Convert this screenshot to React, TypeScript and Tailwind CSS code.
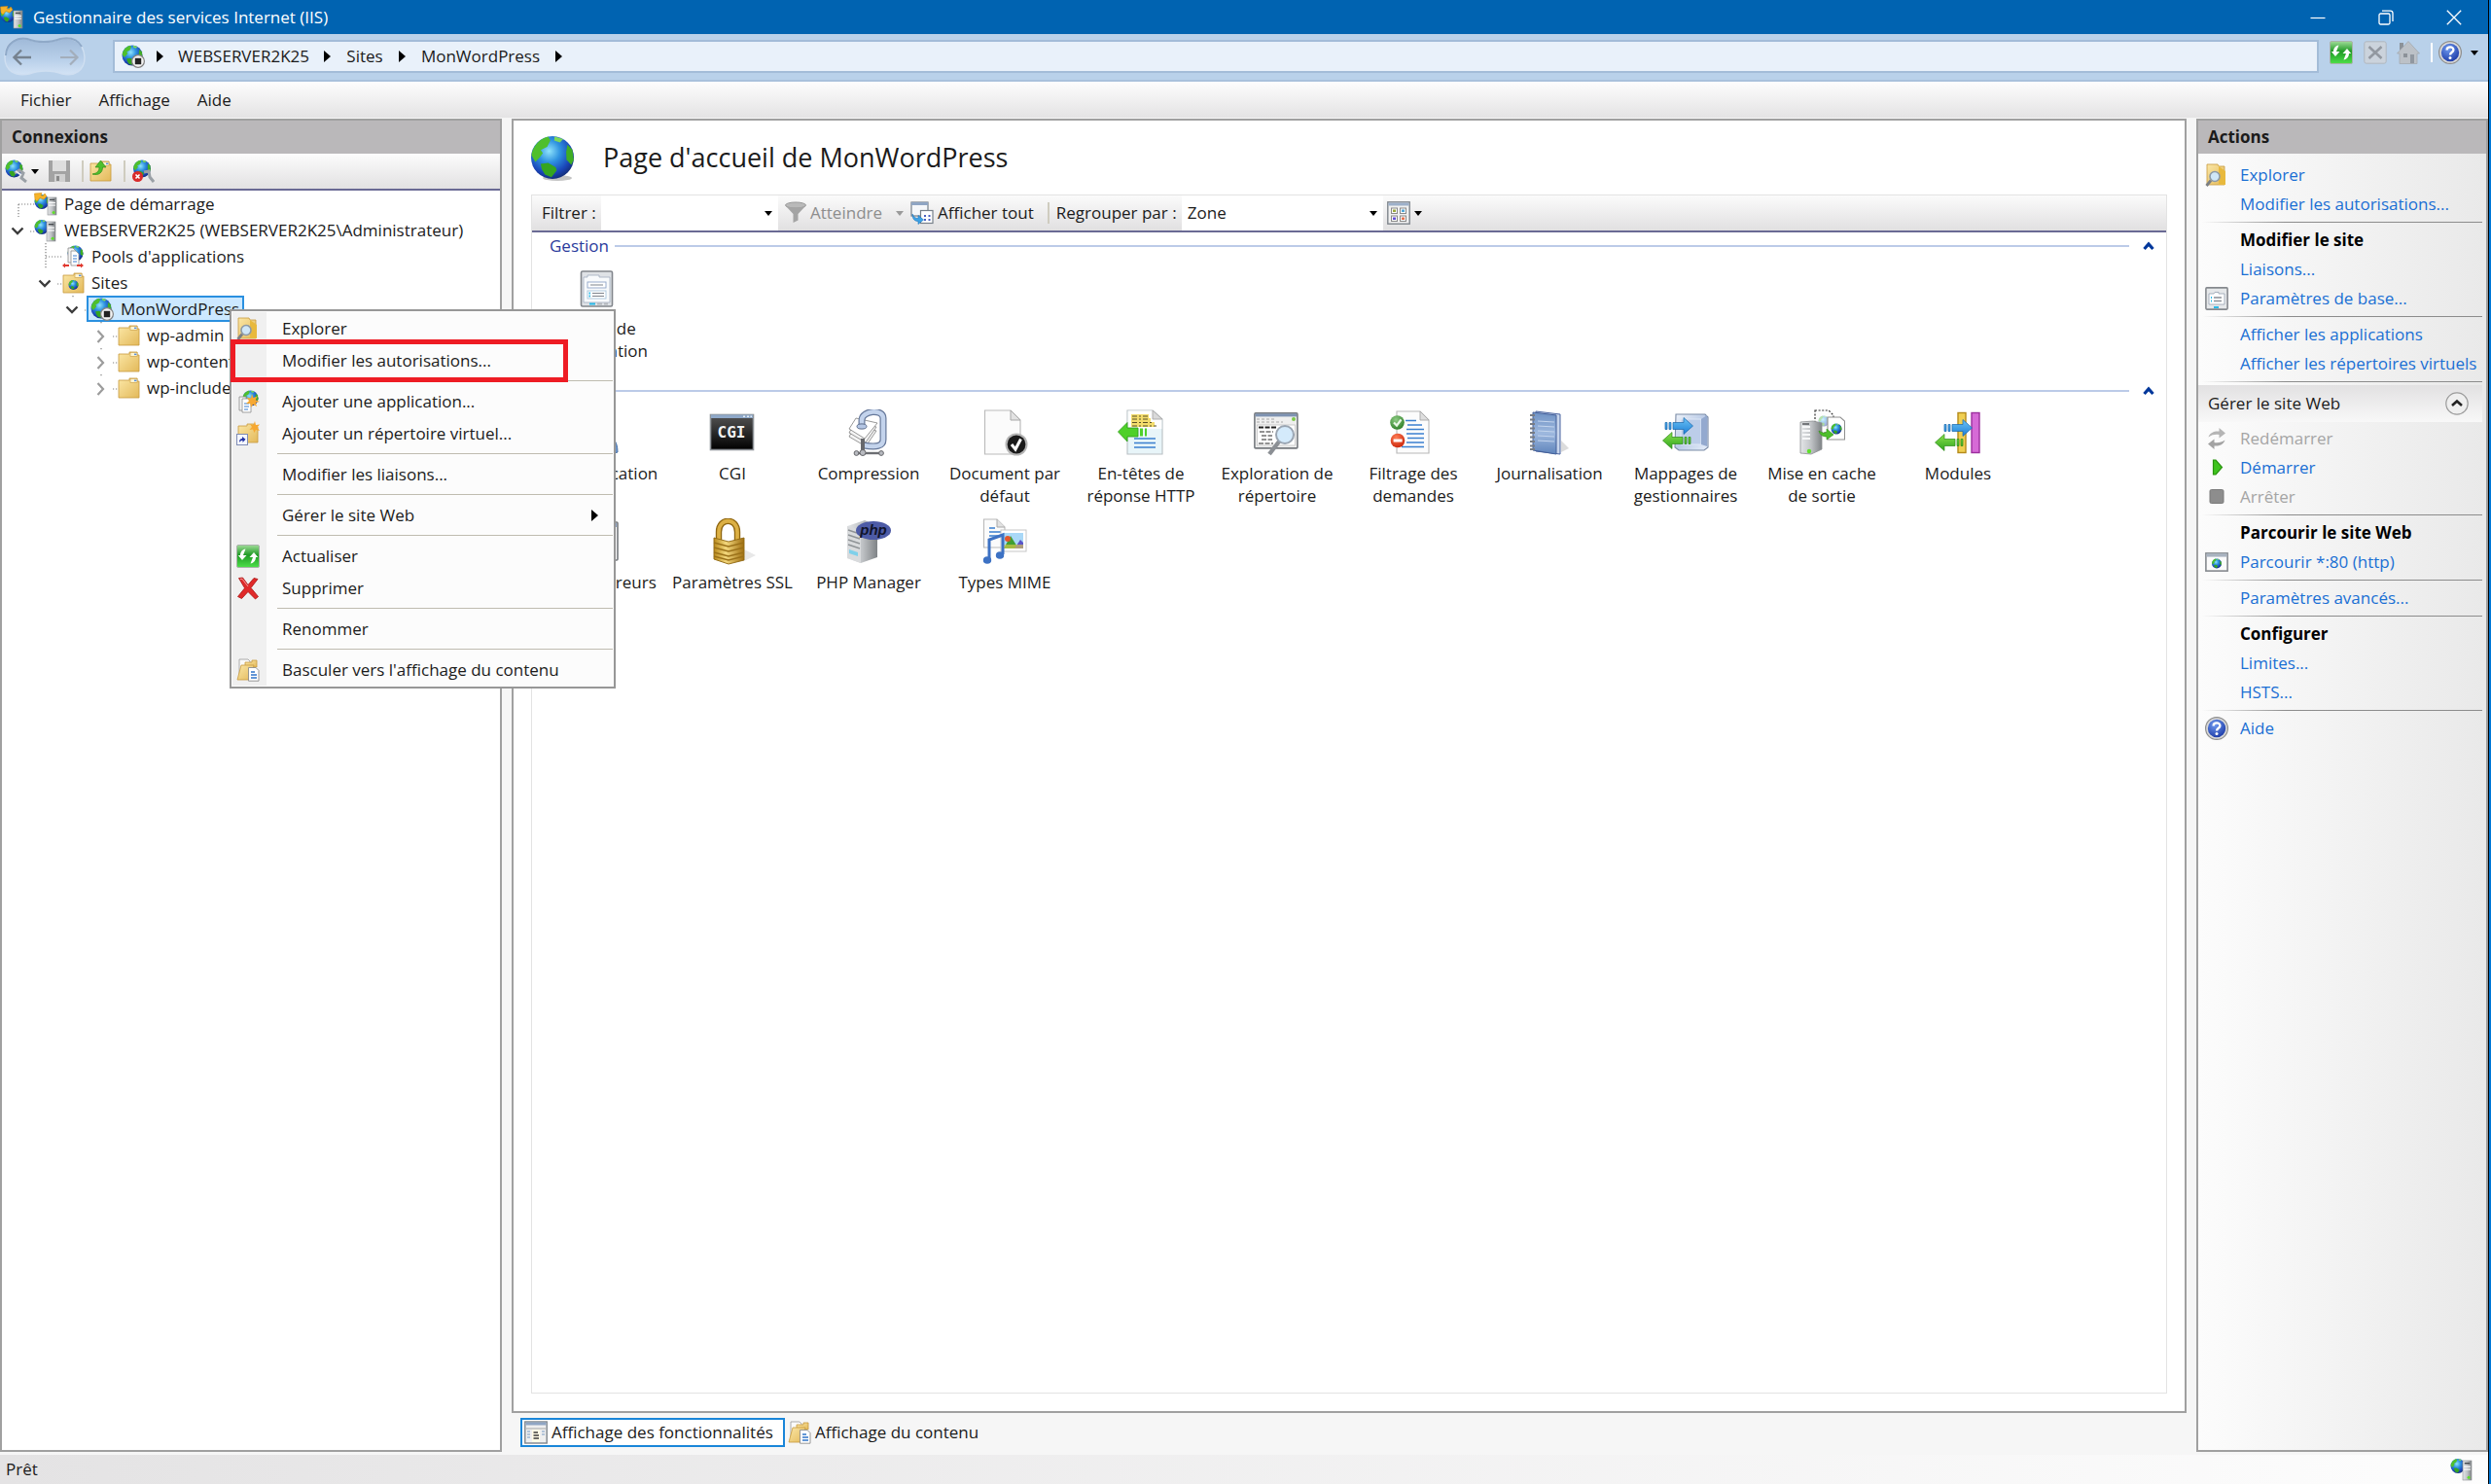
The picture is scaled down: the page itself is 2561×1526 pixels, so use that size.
import React from 'react';

type IconProps = { className?: string };

/* ---------- shared drawing parts ---------- */

const Gradients = () => (
  <svg className="absolute w-0 h-0" aria-hidden="true">
    <defs>
      <radialGradient id="sea" cx="42%" cy="35%" r="65%">
        <stop offset="0" stopColor="#8fe3fb" />
        <stop offset="0.4" stopColor="#2f93e0" />
        <stop offset="0.8" stopColor="#1a45b8" />
        <stop offset="1" stopColor="#14307f" />
      </radialGradient>
      <linearGradient id="folder" x1="0" y1="0" x2="1" y2="1">
        <stop offset="0" stopColor="#fbe7a6" />
        <stop offset="1" stopColor="#e3b95a" />
      </linearGradient>
      <linearGradient id="metal" x1="0" y1="0" x2="1" y2="0">
        <stop offset="0" stopColor="#e4e6e8" />
        <stop offset="0.5" stopColor="#c0c3c6" />
        <stop offset="1" stopColor="#7f8386" />
      </linearGradient>
      <linearGradient id="greenBtn" x1="0" y1="0" x2="0" y2="1">
        <stop offset="0" stopColor="#9fdc98" />
        <stop offset="0.45" stopColor="#1f9a24" />
        <stop offset="1" stopColor="#4ee04a" />
      </linearGradient>
      <linearGradient id="greenArrow" x1="0" y1="0" x2="0" y2="1">
        <stop offset="0" stopColor="#8be04e" />
        <stop offset="1" stopColor="#2fa51e" />
      </linearGradient>
      <linearGradient id="blueArrow" x1="0" y1="0" x2="0" y2="1">
        <stop offset="0" stopColor="#6cc3f5" />
        <stop offset="1" stopColor="#1d7fd6" />
      </linearGradient>
      <linearGradient id="gold" x1="0" y1="0" x2="1" y2="0">
        <stop offset="0" stopColor="#b98a1c" />
        <stop offset="0.4" stopColor="#f3d77c" />
        <stop offset="1" stopColor="#a06f10" />
      </linearGradient>
      <linearGradient id="blackBox" x1="0" y1="0" x2="0" y2="1">
        <stop offset="0" stopColor="#555" />
        <stop offset="1" stopColor="#000" />
      </linearGradient>
      <linearGradient id="steel" x1="0" y1="0" x2="1" y2="1">
        <stop offset="0" stopColor="#eef3fa" />
        <stop offset="0.5" stopColor="#b9cae6" />
        <stop offset="1" stopColor="#e6eefa" />
      </linearGradient>
      <linearGradient id="book" x1="0" y1="0" x2="0" y2="1">
        <stop offset="0" stopColor="#6f92c4" />
        <stop offset="0.5" stopColor="#9db8de" />
        <stop offset="1" stopColor="#5f84bb" />
      </linearGradient>
      <radialGradient id="helpBlue" cx="40%" cy="30%" r="75%">
        <stop offset="0" stopColor="#6f9af0" />
        <stop offset="1" stopColor="#1c3aa6" />
      </radialGradient>
      <radialGradient id="okGreen" cx="40%" cy="30%" r="75%">
        <stop offset="0" stopColor="#8ecb84" />
        <stop offset="1" stopColor="#2b7d25" />
      </radialGradient>
      <radialGradient id="stopRed" cx="40%" cy="30%" r="75%">
        <stop offset="0" stopColor="#ff7d55" />
        <stop offset="1" stopColor="#c92409" />
      </radialGradient>
      <linearGradient id="navBlob" x1="0" y1="0" x2="0" y2="1">
        <stop offset="0" stopColor="#9fb9d8" />
        <stop offset="0.6" stopColor="#b9d0ea" />
        <stop offset="1" stopColor="#d3e3f5" />
      </linearGradient>
    </defs>
  </svg>
);

const Globe = ({ cx, cy, r }: { cx: number; cy: number; r: number }) => (
  <g transform={`translate(${cx} ${cy}) scale(${r / 10})`}>
    <circle r="10" fill="url(#sea)" />
    <path d="M-2 -9.8C-6 -9 -9.4 -5 -9.8 -1L-8 2L-6 0L-4.5 -2L-5.5 -3.5L-2.5 -5L-1 -8Z" fill="#4fbf2c" />
    <path d="M-5.5 3L-2 2.5L1.5 4.5L2 6L-0.5 9.2L-3.5 8L-5 5.5Z" fill="#35a51f" />
    <path d="M7 -6L9.3 -3.6L9.9 1L8.8 3.4L6.6 1L6.4 -2.5Z" fill="#3fae24" />
    <path d="M1 -9.8L5 -8.6L3.5 -7L0.8 -8Z" fill="#7ed957" />
  </g>
);

const Tower = ({ x, y, w, h }: { x: number; y: number; w: number; h: number }) => (
  <g>
    <rect x={x} y={y} width={w} height={h} fill="url(#metal)" stroke="#8b8e91" strokeWidth="0.6" />
    <rect x={x + w * 0.2} y={y + h * 0.1} width={w * 0.6} height={h * 0.07} fill="#44484c" />
    <rect x={x + w * 0.12} y={y + h * 0.28} width={w * 0.76} height={h * 0.06} fill="#fff" />
    <rect x={x + w * 0.12} y={y + h * 0.42} width={w * 0.76} height={h * 0.06} fill="#fff" />
    <circle cx={x + w * 0.68} cy={y + h * 0.86} r={w * 0.17} fill="#5fe02a" />
  </g>
);

const StopBadge = () => (
  <g>
    <circle cx="17" cy="17" r="6.4" fill="#f4f4f4" stroke="#808080" strokeWidth="1.2" />
    <rect x="13.8" y="13.8" width="6.4" height="6.4" fill="#222" />
  </g>
);

/* ---------- 24px icons ---------- */

const Svg24: React.FC<{ className?: string; children: React.ReactNode }> = ({ className = '', children }) => (
  <svg viewBox="0 0 24 24" className={`w-6 h-6 shrink-0 ${className}`} aria-hidden="true">
    {children}
  </svg>
);

const StartPageIcon = ({ className }: IconProps) => (
  <Svg24 className={className}>
    <Globe cx={8} cy={9.5} r={7.5} />
    <path d="M0.5 1L8 0.5L7 3L9.5 3.5L11 1L13 4L10 7L6 5.5L3 9L1 7Z" fill="#f6b42a" stroke="#d58b0c" strokeWidth="0.6" />
    <Tower x={14} y={5} w={9} h={18} />
  </Svg24>
);

const ServerIcon = ({ className }: IconProps) => (
  <Svg24 className={className}>
    <Globe cx={8} cy={8.5} r={7.5} />
    <Tower x={13} y={3} w={9} h={20} />
  </Svg24>
);

const PoolsIcon = () => (
  <Svg24>
    <Globe cx={14.5} cy={8.5} r={8} />
    <path d="M7 3H12L15 6V18H7Z" fill="#f4f4f4" stroke="#8c8c8c" strokeWidth="0.8" />
    <path d="M10 6H15L18 9V21H10Z" fill="#fff" stroke="#8c8c8c" strokeWidth="0.8" />
    <path d="M12 11H16M12 14H16M12 17H16" stroke="#3b7fd0" strokeWidth="1.2" />
    <path d="M4 18.5L1 21L4 23.5V22H8V20H4ZM20 18.5L23 21L20 23.5V22H16V20H20Z" fill="#e0382e" />
  </Svg24>
);

const FolderShape = () => (
  <g>
    <path d="M2 4H13V2H21V5H23V22H2Z" fill="url(#folder)" stroke="#c89b3e" strokeWidth="0.8" />
    <rect x="14" y="2.4" width="7" height="4" fill="#fdf4d2" stroke="#c89b3e" strokeWidth="0.6" />
    <rect x="18" y="3.6" width="2.4" height="1.5" fill="#5a8fd8" />
  </g>
);

const FolderIcon = () => (
  <Svg24>
    <FolderShape />
  </Svg24>
);

const SitesIcon = () => (
  <Svg24>
    <FolderShape />
    <Globe cx={12.5} cy={14} r={5} />
  </Svg24>
);

const SiteStoppedIcon = ({ className }: IconProps) => (
  <Svg24 className={className}>
    <Globe cx={11} cy={11} r={10.5} />
    <StopBadge />
  </Svg24>
);

const GlobeBigIcon = () => (
  <svg viewBox="0 0 48 48" className="w-12 h-12 shrink-0" aria-hidden="true">
    <ellipse cx="27" cy="45" rx="15" ry="3" fill="#c4c4c4" />
    <Globe cx={22} cy={24} r={22} />
  </svg>
);

const ConnectIcon = () => (
  <Svg24>
    <Globe cx={9.5} cy={9.5} r={9} />
    <path d="M10 14L15 11L19 14L17 19L22 23" fill="none" stroke="#9aa0a6" strokeWidth="3" />
    <path d="M11 12L17 16" stroke="#e7eaee" strokeWidth="2" />
  </Svg24>
);

const DisconnectIcon = () => (
  <Svg24>
    <Globe cx={11} cy={9.5} r={9} />
    <path d="M13 13L18 12L19 18L23 23" fill="none" stroke="#9aa0a6" strokeWidth="3" />
    <circle cx="6.5" cy="17.5" r="5.5" fill="#d92b2b" />
    <path d="M4.5 15.5L8.5 19.5M8.5 15.5L4.5 19.5" stroke="#fff" strokeWidth="1.6" />
  </Svg24>
);

const SaveIcon = () => (
  <Svg24>
    <path d="M1 1H23V23H1Z" fill="#a3a3a3" />
    <rect x="5" y="1" width="14" height="11" fill="#dedede" />
    <rect x="7" y="15" width="11" height="8" fill="#d0d0d0" />
    <rect x="9" y="17" width="3" height="5" fill="#8a8a8a" />
  </Svg24>
);

const FolderUpIcon = () => (
  <Svg24>
    <FolderShape />
    <path d="M4 15C10 14 11 11 11 8H7L12.5 1L18 8H14.5C14.5 13 11 17 4 15Z" fill="#4fbf2c" stroke="#2f8d17" strokeWidth="0.7" />
  </Svg24>
);

const ExploreIcon = () => (
  <Svg24>
    <path d="M2 1H13L14 3H20V22H2Z" fill="url(#folder)" stroke="#c89b3e" strokeWidth="0.8" />
    <path d="M14 3L21 8V22H14Z" fill="#e8b93d" />
    <path d="M1.5 23L6 17.5" stroke="#7b7f84" strokeWidth="2.8" />
    <circle cx="10" cy="13.5" r="5" fill="#cfe6f7" stroke="#8d99a5" strokeWidth="1.6" />
  </Svg24>
);

const AddAppIcon = () => (
  <Svg24>
    <Globe cx={14.5} cy={8.5} r={8} />
    <path d="M3 7H10V21H3Z" fill="#f4f4f4" stroke="#8c8c8c" strokeWidth="0.8" />
    <path d="M6 9H12L15 12V23H6Z" fill="#fff" stroke="#8c8c8c" strokeWidth="0.8" />
    <path d="M8 14H13M8 17H13M8 20H12" stroke="#3b7fd0" strokeWidth="1.2" />
    <path d="M16 4L17.4 8L21.5 6.5L19.8 10.3L24 12L19.8 13L21 17L17.2 14.8L15 18L14.2 14L10 14L13 11.2L10.8 7.6L15 8.6Z" fill="#f6a832" />
  </Svg24>
);

const AddVdirIcon = () => (
  <Svg24 className="overflow-visible">
    <path d="M2 4H11V2H18V5H22V21H2Z" fill="url(#folder)" stroke="#c89b3e" strokeWidth="0.8" />
    <path d="M19 -1L20 3L24 2.5L21.5 5.5L24 9L20 8L18.5 11L17 7.5L13.5 8L16 5L14 2L17.6 3Z" fill="#f6a832" />
    <rect x="0.5" y="12.5" width="11" height="11" fill="#f5f7ff" stroke="#7f8cb5" />
    <path d="M3 21C3 18 4 17 6 17V15L9.5 17.8L6.5 21V19C5 19 4 19.5 3 21Z" fill="#2436a5" />
  </Svg24>
);

const RefreshIcon = ({ className }: IconProps) => (
  <Svg24 className={className}>
    <rect x="0.5" y="0.5" width="23" height="23" rx="1.5" fill="url(#greenBtn)" stroke="#a9b3a9" />
    <path d="M9.5 4.5L7 11H10.5L6 16L1.8 11H4C4 8 6 5 9.5 4.5Z" fill="#fff" />
    <path d="M14.5 19.5L17 13H13.5L18 8L22.2 13H20C20 16 18 19 14.5 19.5Z" fill="#fff" />
  </Svg24>
);

const DeleteIcon = () => (
  <Svg24>
    <path d="M2.5 1.5L6.5 1L12 8.5L18 1.5L22 2.5L15 11.5L22.5 20.5L19.5 23L12 15.5L5.5 22.5L1.5 20.5L8.6 11.8Z" fill="#e02a2a" stroke="#a91414" strokeWidth="0.8" />
    <path d="M4 2.5L6 2.3L12 10" fill="none" stroke="#f59a9a" strokeWidth="1" />
  </Svg24>
);

const ContentViewIcon = () => (
  <Svg24>
    <path d="M3 1H12L14 3V16H3Z" fill="#fafafa" stroke="#9b9b9b" strokeWidth="0.8" />
    <path d="M9 4H16V2H21V9H9Z" fill="url(#folder)" stroke="#c89b3e" strokeWidth="0.8" />
    <path d="M5 7H18L15 22H1Z" fill="url(#folder)" stroke="#c89b3e" strokeWidth="0.8" />
    <path d="M12.5 9.5H20L23 12.5V23.2H12.5Z" fill="#fff" stroke="#8c8c8c" strokeWidth="0.9" />
    <path d="M15 14H19M15 17H21M15 20H21" stroke="#2f74c9" strokeWidth="1.3" />
  </Svg24>
);

const FeaturesViewIcon = () => (
  <Svg24>
    <rect x="0.8" y="1" width="22.4" height="22" fill="#efefef" stroke="#7f858c" strokeWidth="1.4" />
    <rect x="1.5" y="1.5" width="21" height="3" fill="#8fa5c4" />
    <path d="M2 8H22" stroke="#a7a7a7" strokeWidth="1" />
    <rect x="8" y="9" width="8" height="13" fill="#fffbe6" />
    <path d="M9.5 12H14M9.5 15H15M9.5 18H15" stroke="#3b3b3b" strokeWidth="1.3" />
    <path d="M3 11H6M3 14H6M3 17H6M18 11H21M18 14H21" stroke="#9fb6d2" strokeWidth="1.3" />
  </Svg24>
);

const FunnelIcon = () => (
  <Svg24>
    <ellipse cx="12" cy="4" rx="10.5" ry="3" fill="#b9b9b9" stroke="#9a9a9a" />
    <path d="M1.5 4.5L9.5 13V22L14.5 19.5V13L22.5 4.5C19 7 5 7 1.5 4.5Z" fill="#a4a4a4" />
  </Svg24>
);

const ShowAllIcon = () => (
  <Svg24>
    <rect x="1" y="1" width="17" height="14" fill="#f5f7fa" stroke="#77808a" strokeWidth="1.2" />
    <rect x="1" y="1" width="17" height="3" fill="#8fa5c4" />
    <rect x="10.5" y="9.5" width="12.5" height="13" fill="#fff" stroke="#77808a" strokeWidth="1.2" />
    <path d="M14 15H16M18.5 15H20.5M14 19H16M18.5 19H20.5" stroke="#4a5fc0" strokeWidth="2" />
    <path d="M2 13C4 17 6 17.5 8 17.5V14.5L13.5 19L8 23.5V20.5C4 20.5 2 18 2 13Z" fill="#3ca2e6" stroke="#1c74b8" strokeWidth="0.6" />
  </Svg24>
);

const ViewModeIcon = () => (
  <Svg24>
    <rect x="0.8" y="0.8" width="22.4" height="22.4" fill="#f0f0f0" stroke="#7f858c" strokeWidth="1.4" />
    <rect x="1.5" y="1.5" width="21" height="3" fill="#9db0ca" />
    <g fill="#fafafa" stroke="#8a8a8a" strokeWidth="1">
      <rect x="4.5" y="7" width="6" height="5.5" />
      <rect x="13.5" y="7" width="6" height="5.5" />
      <rect x="4.5" y="15" width="6" height="5.5" />
      <rect x="13.5" y="15" width="6" height="5.5" />
    </g>
    <rect x="6" y="8.500" width="3" height="2.500" fill="#9aa83c" />
    <rect x="15" y="8.500" width="3" height="2.500" fill="#4fa6d8" />
    <rect x="6" y="16.500" width="3" height="2.500" fill="#6450d8" />
    <rect x="15" y="16.500" width="3" height="2.500" fill="#e8704c" />
  </Svg24>
);

const StopNavIcon = () => (
  <Svg24>
    <rect x="0.8" y="0.8" width="22.4" height="22.4" rx="2" fill="#cbd3dc" stroke="#b0b7bf" />
    <path d="M5.5 6L18.5 18M18.5 6L5.5 18" stroke="#9298a0" strokeWidth="2.6" />
  </Svg24>
);

const HomeIcon = () => (
  <Svg24>
    <path d="M3 2H7V7L3 10Z" fill="#8c9299" />
    <path d="M12 0.5L0.5 13H3V23.5H21V13H23.5Z" fill="#bcc1c7" stroke="#a3a9b0" strokeWidth="0.8" />
    <rect x="7" y="13" width="4" height="4" fill="#8c9299" />
    <rect x="14" y="14" width="4" height="9" fill="#9097a0" />
  </Svg24>
);

const HelpIcon = () => (
  <Svg24>
    <circle cx="12" cy="12" r="11.4" fill="#d9d9d9" stroke="#8e8e8e" strokeWidth="1.2" />
    <circle cx="12" cy="12" r="9.2" fill="url(#helpBlue)" />
    <path d="M8.6 9.4C8.6 5.4 15.6 5.4 15.4 9.4C15.3 11.8 12 11.8 12 14.4" fill="none" stroke="#fff" strokeWidth="2.3" />
    <circle cx="12" cy="17.6" r="1.5" fill="#fff" />
  </Svg24>
);

const BasicSettingsIcon = () => (
  <Svg24>
    <rect x="0.9" y="0.9" width="22.2" height="22.2" rx="1" fill="#e6e8ea" stroke="#85898e" strokeWidth="1.6" />
    <path d="M4 18V7H9L10 5.5H14V7H20V18Z" fill="#fff" stroke="#9fa9b8" strokeWidth="0.9" />
    <path d="M6 11H7M6 14.5H7" stroke="#28b9e8" strokeWidth="1.8" />
    <path d="M9 11H17M9 14.5H17" stroke="#8a8f96" strokeWidth="1.4" />
    <path d="M9 21H14" stroke="#28b9e8" strokeWidth="2" />
  </Svg24>
);

const RestartIcon = () => (
  <Svg24>
    <path d="M3.5 10.5C5 5.5 10 4 14.5 4.5V1L21 6.5L14.5 11.5V8C10.5 7.5 7 8 3.5 10.5Z" fill="#b5b5b5" />
    <path d="M20.5 13.5C19 18.5 14 20 9.5 19.5V23L3 17.5L9.5 12.5V16C13.5 16.5 17 16 20.5 13.5Z" fill="#a3a3a3" />
  </Svg24>
);

const StartIcon = () => (
  <Svg24>
    <path d="M8.5 4H11L17.5 11.5L11 19H8.5Z" fill="#3fc41f" stroke="#2a9310" strokeWidth="1.2" />
  </Svg24>
);

const StopIcon = () => (
  <Svg24>
    <rect x="5" y="4.5" width="14" height="14" rx="1.5" fill="#8d8d8d" stroke="#7b7b7b" />
  </Svg24>
);

const BrowseIcon = () => (
  <Svg24>
    <rect x="0.9" y="2.9" width="22.2" height="18.2" fill="#fbfbfb" stroke="#85898e" strokeWidth="1.6" />
    <rect x="1.5" y="3.2" width="21" height="3.4" fill="#a9b3c0" />
    <Globe cx={12} cy={13.5} r={5} />
  </Svg24>
);

/* ---------- 48px feature icons ---------- */

const Svg48: React.FC<{ children: React.ReactNode }> = ({ children }) => (
  <svg viewBox="0 0 48 48" className="w-12 h-12 shrink-0" aria-hidden="true">
    {children}
  </svg>
);

const ArrowRight = ({ x, y }: { x: number; y: number }) => (
  <g transform={`translate(${x} ${y})`} fill="url(#blueArrow)" stroke="#1765ab" strokeWidth="0.7">
    <path d="M0 5.5H2V12.5H0ZM4 5.5H6V12.5H4ZM8 5.5H19V0.5L28.5 9L19 17.5V12.5H8Z" />
  </g>
);

const ArrowLeft = ({ x, y }: { x: number; y: number }) => (
  <g transform={`translate(${x} ${y})`} fill="url(#greenArrow)" stroke="#2c8a17" strokeWidth="0.7">
    <path d="M29 5.5H27V12.5H29ZM25 5.5H23V12.5H25ZM21 5.5H10V0.5L0.5 9L10 17.5V12.5H21Z" />
  </g>
);

const ConfigEditorIcon = () => (
  <Svg48>
    <rect x="8.5" y="7" width="32" height="36" rx="1.5" fill="#dfe2e6" stroke="#82868c" strokeWidth="1.6" />
    <path d="M11 39V13H15V11H27V13H38V39Z" fill="#f8fafc" stroke="#a9b3c4" strokeWidth="0.9" />
    <rect x="15" y="18" width="19" height="6" fill="#fff" stroke="#8fa5c8" strokeWidth="0.9" />
    <rect x="15" y="27" width="19" height="8" fill="#fff" stroke="#a9c5dc" strokeWidth="0.9" />
    <path d="M18 21H31M20 29.5H32M20 32.5H32" stroke="#7d838b" strokeWidth="1.2" />
    <path d="M16.5 29.5H18M16.5 32.5H18M17 40.5H23" stroke="#28b9e8" strokeWidth="2" />
    <path d="M25 40.5H30M32 40.5H36" stroke="#b4b8bd" strokeWidth="2" />
  </Svg48>
);

const AuthIcon = () => (
  <Svg48>
    <circle cx="24" cy="14" r="9" fill="#e6c39d" />
    <path d="M10 46C10 30 16 25 28 25C40 25 46 32 46 44C42 46 14 47 10 46Z" fill="#6d96cc" stroke="#4c74a8" />
  </Svg48>
);

const CgiIcon = () => (
  <Svg48>
    <rect x="1.5" y="5.5" width="44" height="36" fill="url(#blackBox)" stroke="#8f9499" strokeWidth="1.6" />
    <rect x="2" y="5.5" width="43" height="3.5" fill="#8fa9c9" />
    <path d="M35 7.2H37M39 7.2H41M42.5 7.2H44" stroke="#e4edf6" strokeWidth="1.4" />
    <text x="23" y="29" textAnchor="middle" fontFamily="DejaVu Sans Mono" fontWeight="700" fontSize="16" fill="#f2f2f2">CGI</text>
  </Svg48>
);

const CompressionIcon = () => (
  <Svg48>
    <g stroke="#7e7e7e" strokeWidth="0.8" fill="#f4f4f4">
      <path d="M4 28L10 17L32 22L21 38Z" />
      <path d="M4 24L10 13L32 18L21 34Z" />
      <path d="M4 20L11 9L33 14L20 30Z" fill="#fff" />
    </g>
    <path d="M17 17V11C17 1 39 -1 39 9V31C39 38 32 39 19 37" fill="none" stroke="#66789a" strokeWidth="7" />
    <path d="M17 17V11C17 1 39 -1 39 9V31C39 38 32 39 19 37" fill="none" stroke="#c3d3ec" strokeWidth="4.6" />
    <ellipse cx="17" cy="17.5" rx="5" ry="2.6" fill="#b4c6e4" stroke="#5c6c8a" />
    <path d="M18 30V46" stroke="#66676b" strokeWidth="4" />
    <path d="M11 45H37" stroke="#6c6e72" strokeWidth="2.4" />
    <circle cx="11.5" cy="45" r="2.4" fill="#b8bac0" stroke="#66676b" />
    <circle cx="18" cy="44.5" r="3" fill="#b8bac0" stroke="#66676b" />
    <circle cx="37" cy="45" r="2.4" fill="#b8bac0" stroke="#66676b" />
  </Svg48>
);

const DefaultDocIcon = () => (
  <Svg48>
    <path d="M3.5 1H30L40 11V46H3.5Z" fill="#fbfbfb" stroke="#bcbcbc" strokeWidth="1.2" />
    <path d="M30 1V11H40Z" fill="#e2e2e2" stroke="#a8a8a8" strokeWidth="1" />
    <circle cx="36" cy="36" r="11.5" fill="#b5b5b5" />
    <circle cx="36" cy="36" r="9.4" fill="#1a1a1a" />
    <path d="M31 36L35 41L40.5 30.5" fill="none" stroke="#fff" strokeWidth="3" />
  </Svg48>
);

const HeadersIcon = () => (
  <Svg48>
    <path d="M10 1H36L46 10V46H10Z" fill="#e8f5f9" stroke="#b9c0c4" strokeWidth="1.1" />
    <path d="M10.6 1.6H36L45.4 10V20H10.6Z" fill="#fdfdfd" />
    <path d="M36 1V10H46Z" fill="#d9d9d9" stroke="#a8a8a8" strokeWidth="0.9" />
    <path d="M14 5H32V9H34V13H38V18H14Z" fill="#f3dc6c" />
    <path d="M15 7H31M15 10H33M15 13.5H37M15 17H40" stroke="#5a5228" strokeWidth="1.2" strokeDasharray="5 2 2 2" />
    <path d="M0.5 23L10 13.5V19H21V28H10V33Z" fill="#4fd02a" stroke="#2c9a17" strokeWidth="0.8" />
    <path d="M23 19.5H26V27.5H23ZM28 19.5H30V27.5H28Z" fill="#4fd02a" />
    <path d="M17 30H39M17 34.5H39M17 39H39" stroke="#3a7fcf" strokeWidth="1.6" />
  </Svg48>
);

const DirBrowseIcon = () => (
  <Svg48>
    <rect x="0.9" y="3.9" width="44" height="36" rx="1" fill="#efefef" stroke="#75797e" strokeWidth="1.6" />
    <rect x="1.6" y="4.4" width="42.6" height="3" fill="#7e93b2" />
    <path d="M3 10H22M3 13H30" stroke="#a7a7a7" strokeWidth="1.2" strokeDasharray="3 2" />
    <circle cx="41" cy="10" r="2" fill="#7ec84a" />
    <rect x="3.5" y="16" width="39" height="21" fill="#fff" stroke="#c2c2c2" strokeWidth="0.8" />
    <path d="M5 18.5H24" stroke="#222" strokeWidth="2" strokeDasharray="5 1.5" />
    <path d="M6 23H20M8 27H19M8 31H19M5 35H20" stroke="#6f6f6f" strokeWidth="1.6" strokeDasharray="5 1.5" />
    <path d="M16 46L26 33" stroke="#8b8f94" strokeWidth="4.4" />
    <circle cx="32" cy="26" r="9" fill="#d4eafb" stroke="#9aa5b2" strokeWidth="2" />
  </Svg48>
);

const FilterReqIcon = () => (
  <Svg48>
    <path d="M7 2H31L40 11V45H7Z" fill="#fcfcfc" stroke="#b7b7b7" strokeWidth="1.1" />
    <path d="M31 2V11H40Z" fill="#dedede" stroke="#a8a8a8" strokeWidth="0.9" />
    <path d="M16 11.5H27M18 16H33M17 20.5H35M17 25H35M18 29.5H35M17 34H35M12 38.5H35" stroke="#3a7fcf" strokeWidth="1.6" />
    <circle cx="7.5" cy="13.5" r="7.3" fill="url(#okGreen)" />
    <path d="M4 13.5L7 16.5L11.5 10.5" fill="none" stroke="#e9f7e6" strokeWidth="2.2" />
    <circle cx="8" cy="32" r="7.3" fill="url(#stopRed)" />
    <rect x="3.6" y="30.5" width="9" height="3" fill="#fff" />
  </Svg48>
);

const LoggingIcon = () => (
  <Svg48>
    <path d="M36 44L44 40L36 32Z" fill="#dcdcdc" />
    <path d="M10 2L35 5V46L10 43Z" fill="#c7d5ec" stroke="#4a64a0" strokeWidth="1" />
    <path d="M7 3L31 6V46L7 42Z" fill="url(#book)" stroke="#44609a" strokeWidth="1" />
    <path d="M12 12L29 13M12 17L29 18M12 22L29 23M12 27L29 28M12 32L29 33" stroke="#c4d5ee" strokeWidth="1" />
    <path d="M4 6H9M4 10.5H9M4 15H9M4 19.5H9M4 24H9M4 28.5H9M4 33H9M4 37.5H9M4 41H9" stroke="#777c84" strokeWidth="1.8" />
  </Svg48>
);

const HandlerIcon = () => (
  <Svg48>
    <path d="M14 5H44L47 8V39L43 42H17L13 39Z" fill="url(#steel)" stroke="#7b8ba6" strokeWidth="1.1" />
    <path d="M19 10H40V36H19Z" fill="#bccde9" stroke="#dfe8f6" strokeWidth="1" />
    <path d="M40 10L46 6V38L40 36Z" fill="#93a9cf" />
    <ArrowRight x={3} y={8} />
    <ArrowLeft x={0} y={23} />
  </Svg48>
);

const CacheIcon = () => (
  <Svg48>
    <path d="M17 1H31L36 6V24H17Z" fill="#fcfcfc" stroke="#333" strokeWidth="1.2" strokeDasharray="2 1.6" />
    <g opacity="0.4">
      <Globe cx={26} cy={12} r={5.5} />
    </g>
    <path d="M2 13L15 12L24 14V41L13 46L2 45Z" fill="url(#metal)" stroke="#8b8e91" strokeWidth="0.8" />
    <path d="M4 18H12M4 22H12M4 26H12M4 30H12" stroke="#f6f7f8" strokeWidth="2" />
    <path d="M4 15H11" stroke="#4c5054" strokeWidth="1.4" />
    <circle cx="11" cy="43" r="2.2" fill="#5fe02a" />
    <path d="M30 8H43L47.500 12V31H30Z" fill="#fff" stroke="#8f8f8f" strokeWidth="1.1" />
    <Globe cx={39} cy={20} r={5.5} />
    <path d="M21 22C24 24 27 25 29 23V20L36 26L29 31V28C25 28 22 26 21 22Z" fill="#4fbf2c" stroke="#2f8d17" strokeWidth="0.6" />
  </Svg48>
);

const ModulesIcon = () => (
  <Svg48>
    <rect x="24" y="3.5" width="8" height="41" fill="#f0cf52" stroke="#b58a1a" strokeWidth="1.4" />
    <rect x="38" y="3.5" width="8" height="41" fill="#d66ad6" stroke="#9c2f9e" strokeWidth="1.4" />
    <ArrowRight x={10} y={10} />
    <ArrowLeft x={0} y={25} />
  </Svg48>
);

const ErrorPagesIcon = () => (
  <Svg48>
    <rect x="2" y="4" width="44" height="39" rx="1" fill="#fbfbfb" stroke="#75797e" strokeWidth="1.6" />
    <rect x="3" y="5" width="42" height="4" fill="#8fa5c4" />
    <circle cx="22" cy="27" r="9" fill="url(#stopRed)" />
  </Svg48>
);

const SslIcon = () => (
  <Svg48>
    <path d="M36 44L48 38L36 32Z" fill="#e8e8e8" />
    <path d="M10 26V14C10 -1 29 -1 29 14V26" fill="none" stroke="#8f6610" strokeWidth="6.4" />
    <path d="M10 26V14C10 -1 29 -1 29 14V26" fill="none" stroke="#dcb044" strokeWidth="3.8" />
    <path d="M5 20L20 24L36 20V43L20 47L5 42Z" fill="url(#gold)" stroke="#8f6610" strokeWidth="0.9" />
    <path d="M5 25L20 29L36 25M5 30L20 34L36 30M5 35L20 39L36 35M5 39L20 43L36 39" fill="none" stroke="#9a7018" strokeWidth="1.3" />
  </Svg48>
);

const PhpIcon = () => (
  <Svg48>
    <path d="M2 8L20 2L33 8V40L16 46L2 41Z" fill="url(#metal)" />
    <path d="M2 8L16 12V46L2 41Z" fill="#d9dbdd" />
    <path d="M3 12L15 16M3 17L15 21M3 22L15 26M3 27L15 31" stroke="#8f9396" strokeWidth="1.4" />
    <path d="M4 32L13 35V39L4 36Z" fill="#7fd0ea" />
    <ellipse cx="29" cy="12.5" rx="18" ry="9.6" fill="#4d5ba6" />
    <text x="29" y="17" textAnchor="middle" fontFamily="Liberation Sans" fontWeight="700" fontStyle="italic" fontSize="15" fill="#10142c">php</text>
  </Svg48>
);

const MimeIcon = () => (
  <Svg48>
    <path d="M2.5 1H16L24 9V30H2.5Z" fill="#fbfbfb" stroke="#b9b9b9" strokeWidth="1.1" />
    <path d="M16 1V9H24" fill="#e2e2e2" stroke="#a8a8a8" strokeWidth="1" />
    <path d="M8 10H14M8 14H20M8 18H20" stroke="#3a7fcf" strokeWidth="1.5" />
    <rect x="20" y="12" width="26" height="22" fill="#fff" stroke="#c6c6c6" />
    <rect x="23" y="15" width="20" height="16" fill="#a9d8f7" />
    <path d="M23 31L30 18L38 31Z" fill="#3f9f34" />
    <path d="M34 31L40 22L43 25V31Z" fill="#5a55c8" />
    <circle cx="27" cy="21" r="3" fill="#e2562b" />
    <path d="M23 27H43V31H23Z" fill="#e6cf4c" opacity="0.6" />
    <path d="M8 43V22L22 17V37" fill="none" stroke="#3d72c4" strokeWidth="3" />
    <ellipse cx="6" cy="43" rx="4.2" ry="3.8" fill="#3d72c4" />
    <ellipse cx="19" cy="38" rx="4.2" ry="3.8" fill="#3d72c4" />
  </Svg48>
);

/* ---------- small glyphs ---------- */

const CaretDown = ({ className = 'text-black' }: IconProps) => (
  <svg viewBox="0 0 8 5" className={`w-2 h-[5px] shrink-0 ${className}`} aria-hidden="true">
    <path d="M0 0H8L4 5Z" fill="currentColor" />
  </svg>
);

const CaretRight = () => (
  <svg viewBox="0 0 7 12" className="w-[7px] h-3 shrink-0" aria-hidden="true">
    <path d="M0 0L7 6L0 12Z" fill="#000" />
  </svg>
);

/* ---------- data ---------- */

interface TreeNode {
  label: string;
  level: number;
  state: 'open' | 'closed' | 'leaf';
  icon: React.ReactNode;
  selected?: boolean;
  guides: string;
}

const tree: TreeNode[] = [
  { label: 'Page de démarrage', level: 0, state: 'leaf', icon: <StartPageIcon />, guides: 'M15 14H32M15 14V27' },
  { label: 'WEBSERVER2K25 (WEBSERVER2K25\\Administrateur)', level: 0, state: 'open', icon: <ServerIcon />, guides: 'M27 15H32' },
  { label: "Pools d'applications", level: 1, state: 'leaf', icon: <PoolsIcon />, guides: 'M15 0V27M15 14H32' },
  { label: 'Sites', level: 1, state: 'open', icon: <SitesIcon />, guides: 'M27 15H32' },
  { label: 'MonWordPress', level: 2, state: 'open', icon: <SiteStoppedIcon />, selected: true, guides: 'M15 0V2M27 15H32' },
  { label: 'wp-admin', level: 3, state: 'closed', icon: <FolderIcon />, guides: 'M15 0V2M27 15H32' },
  { label: 'wp-content', level: 3, state: 'closed', icon: <FolderIcon />, guides: 'M15 0V2M27 15H32' },
  { label: 'wp-includes', level: 3, state: 'closed', icon: <FolderIcon />, guides: 'M15 0V2M27 15H32' },
];

const indents = ['pl-[2px]', 'pl-[30px]', 'pl-[58px]', 'pl-[87px]'];

interface Feature {
  label: string;
  icon: React.ReactNode;
}

const management: Feature[] = [{ label: 'Éditeur de configuration', icon: <ConfigEditorIcon /> }];

const iis: Feature[] = [
  { label: 'Authentification', icon: <AuthIcon /> },
  { label: 'CGI', icon: <CgiIcon /> },
  { label: 'Compression', icon: <CompressionIcon /> },
  { label: 'Document par défaut', icon: <DefaultDocIcon /> },
  { label: 'En-têtes de réponse HTTP', icon: <HeadersIcon /> },
  { label: 'Exploration de répertoire', icon: <DirBrowseIcon /> },
  { label: 'Filtrage des demandes', icon: <FilterReqIcon /> },
  { label: 'Journalisation', icon: <LoggingIcon /> },
  { label: 'Mappages de gestionnaires', icon: <HandlerIcon /> },
  { label: 'Mise en cache de sortie', icon: <CacheIcon /> },
  { label: 'Modules', icon: <ModulesIcon /> },
  { label: "Pages d'erreurs", icon: <ErrorPagesIcon /> },
  { label: 'Paramètres SSL', icon: <SslIcon /> },
  { label: 'PHP Manager', icon: <PhpIcon /> },
  { label: 'Types MIME', icon: <MimeIcon /> },
];

type MenuEntry = 'sep' | { label: string; icon?: React.ReactNode; submenu?: boolean; marked?: boolean };

const contextMenu: MenuEntry[] = [
  { label: 'Explorer', icon: <ExploreIcon /> },
  { label: 'Modifier les autorisations...', marked: true },
  'sep',
  { label: 'Ajouter une application...', icon: <AddAppIcon /> },
  { label: 'Ajouter un répertoire virtuel...', icon: <AddVdirIcon /> },
  'sep',
  { label: 'Modifier les liaisons...' },
  'sep',
  { label: 'Gérer le site Web', submenu: true },
  'sep',
  { label: 'Actualiser', icon: <RefreshIcon /> },
  { label: 'Supprimer', icon: <DeleteIcon /> },
  'sep',
  { label: 'Renommer' },
  'sep',
  { label: "Basculer vers l'affichage du contenu", icon: <ContentViewIcon /> },
];

/* ---------- panels ---------- */

const TitleBar = () => (
  <header className="h-[35px] shrink-0 bg-[#0063b1] text-white flex items-center">
    <StartPageIcon className="mr-[10px]" />
    <h1 className="text-[17px]">Gestionnaire des services Internet (IIS)</h1>
    <div className="ml-auto flex items-center gap-[54px] pr-[27px]">
      <button aria-label="Réduire">
        <svg viewBox="0 0 16 16" className="w-4 h-4">
          <path d="M0.5 8.5H15.5" stroke="#fff" strokeWidth="1.2" />
        </svg>
      </button>
      <button aria-label="Restaurer">
        <svg viewBox="0 0 16 16" className="w-4 h-4" fill="none" stroke="#fff" strokeWidth="1.3">
          <rect x="1" y="4" width="11" height="11" rx="1.5" />
          <path d="M4 1.2H12.5C14 1.2 15 2.2 15 3.6V12" />
        </svg>
      </button>
      <button aria-label="Fermer">
        <svg viewBox="0 0 16 16" className="w-4 h-4">
          <path d="M0.8 0.8L15.2 15.2M15.2 0.8L0.8 15.2" stroke="#fff" strokeWidth="1.3" />
        </svg>
      </button>
    </div>
  </header>
);

const AddressBar = () => (
  <div className="h-[49px] shrink-0 bg-[#b9d1ea] border-b-2 border-[#a9c1dc] flex items-start">
    <svg viewBox="0 0 112 46" className="w-28 h-[46px] shrink-0" aria-hidden="true">
      <path d="M5 24C5 8 18 2 28 5C38 9 52 9 62 5C74 2 86 8 87 24C87 38 76 44 64 41C54 37 40 37 30 41C16 44 5 38 5 24Z" fill="url(#navBlob)" stroke="#cfdff1" strokeWidth="1.5" />
      <path d="M6 22C6 9 18 3 28 5C38 9 52 9 62 5C72 3 80 6 84 13" fill="none" stroke="#8fa9c8" strokeWidth="2" />
      <path d="M32 24H15M22 16.5L14.5 24L22 31.5" fill="none" stroke="#76828f" strokeWidth="2.4" />
      <path d="M62 24H79M72 16.5L79.5 24L72 31.5" fill="none" stroke="#a3aebb" strokeWidth="2.2" />
    </svg>
    <nav className="mt-[6px] ml-[4px] h-[34px] flex-1 border-2 border-[#a3bcd8] bg-[#e9f1fa] flex items-center pl-[7px] text-[17px]">
      <SiteStoppedIcon />
      <span className="ml-[12px] flex items-center">
        <CaretRight />
        <a href="#serveur" className="w-[165px] text-center">WEBSERVER2K25</a>
        <CaretRight />
        <a href="#sites" className="w-[70px] text-center">Sites</a>
        <CaretRight />
        <a href="#monwordpress" className="w-[154px] text-center">MonWordPress</a>
        <CaretRight />
      </span>
    </nav>
    <div className="mt-[7px] ml-[11px] pr-[10px] flex items-center">
      <button aria-label="Actualiser"><RefreshIcon /></button>
      <button aria-label="Arrêter" className="ml-[11px]"><StopNavIcon /></button>
      <button aria-label="Accueil" className="ml-[10px]"><HomeIcon /></button>
      <span className="ml-[11px] w-[2px] h-5 bg-white" />
      <button aria-label="Aide" className="ml-[6px] flex items-center gap-[9px]">
        <HelpIcon />
        <CaretDown />
      </button>
    </div>
  </div>
);

const MenuBar = () => (
  <nav className="h-[37px] shrink-0 bg-linear-to-b from-[#fdfdfd] to-[#e4e3e4] flex items-center gap-[28px] pl-[21px] text-[17px]">
    <button>Fichier</button>
    <button>Affichage</button>
    <button>Aide</button>
  </nav>
);

const PanelTitle: React.FC<{ children: React.ReactNode }> = ({ children }) => (
  <h2 className="h-[34px] shrink-0 bg-[#bab8ba] pl-[10px] flex items-center font-bold text-[17px]">{children}</h2>
);

const ToolSeparator = () => <span className="w-[2px] h-[22px] shrink-0 bg-[#cfccbf]" />;

const Connections = () => (
  <aside className="w-[516px] shrink-0 border-2 border-[#a0a0a0] bg-white flex flex-col">
    <PanelTitle>Connexions</PanelTitle>
    <div className="h-[38px] shrink-0 bg-linear-to-b from-[#fcfcfc] to-[#e2e1e2] border-b-2 border-[#6a6a94] flex items-center pl-[3px]">
      <button aria-label="Se connecter" className="flex items-center gap-[3px]">
        <ConnectIcon />
        <CaretDown />
      </button>
      <button aria-label="Enregistrer" className="ml-[9px] mr-[11px]"><SaveIcon /></button>
      <ToolSeparator />
      <button aria-label="Remonter" className="ml-[5px] mr-[12px]"><FolderUpIcon /></button>
      <ToolSeparator />
      <button aria-label="Supprimer la connexion" className="ml-[6px]"><DisconnectIcon /></button>
    </div>
    <ul role="tree">
      {tree.map((node) => (
        <li key={node.label} role="treeitem" aria-selected={!!node.selected} className={`h-[27px] flex items-center ${indents[node.level]}`}>
          <svg viewBox="0 0 29 27" className="w-[29px] h-[27px] shrink-0 overflow-visible" aria-hidden="true">
            <path d={node.guides} fill="none" stroke="#808080" strokeWidth="1.2" strokeDasharray="1.2 1.8" />
            {node.state === 'open' && <path d="M8.5 11.5L14 17L19.5 11.5" fill="none" stroke="#3c3c3c" strokeWidth="2.4" />}
            {node.state === 'closed' && <path d="M11.5 9L17 15L11.5 21" fill="none" stroke="#9c9c9c" strokeWidth="2.2" />}
          </svg>
          <span
            className={
              node.selected
                ? 'h-[27px] flex items-center gap-[7px] pl-[2px] pr-[3px] border-2 border-[#2a90e0] bg-[#cce8ff]'
                : 'h-[27px] flex items-center gap-[7px] pl-[2px]'
            }
          >
            {node.icon}
            <span className="text-[17px] whitespace-nowrap">{node.label}</span>
          </span>
        </li>
      ))}
    </ul>
  </aside>
);

const FeatureGroup: React.FC<{ title: string; items: Feature[] }> = ({ title, items }) => (
  <section className="pl-[18px] pr-[12px]">
    <h3 className="h-[27px] flex items-center text-[17px] text-[#2a3a9c]">
      {title}
      <span className="ml-[6px] h-[2px] flex-1 bg-[#bccbe8]" />
      <button aria-label="Réduire le groupe" className="ml-[14px]">
        <svg viewBox="0 0 12 10" className="w-3 h-[10px]">
          <path d="M1.5 8L6 3L10.5 8" fill="none" stroke="#00379b" strokeWidth="3.2" />
        </svg>
      </button>
    </h3>
    <ul className="-ml-[17px] mt-[6px] grid grid-cols-[repeat(auto-fill,130px)] gap-x-[10px] gap-y-[18px]">
      {items.map((f) => (
        <li key={f.label} className="h-[94px] flex flex-col items-center">
          {f.icon}
          <span className="mt-[6px] w-[130px] text-center text-[17px] leading-[23px]">{f.label}</span>
        </li>
      ))}
    </ul>
  </section>
);

const FilterBar = () => (
  <div className="h-[38px] shrink-0 bg-linear-to-b from-[#fbfbfb] to-[#e1e0e1] border-b-2 border-[#6a6a94] flex items-center text-[17px]">
    <label htmlFor="filtre" className="w-[71px] pl-[10px] whitespace-nowrap">Filtrer :</label>
    <span className="flex items-center h-full w-[182px] bg-white pr-[6px]">
      <input id="filtre" type="text" className="flex-1 min-w-0 h-full outline-none bg-transparent" />
      <button aria-label="Filtres récents" className="flex"><CaretDown /></button>
    </span>
    <button className="ml-[6px] flex items-center gap-[3px] text-[#8d8d8d]">
      <FunnelIcon />
      Atteindre
      <CaretDown className="ml-[11px] text-[#9a9a9a]" />
    </button>
    <button className="ml-[7px] flex items-center gap-[4px]">
      <ShowAllIcon />
      Afficher tout
    </button>
    <span className="ml-[14px] mr-[7px]"><span className="block w-[2px] h-[22px] bg-[#cfccbf]" /></span>
    <label htmlFor="regrouper" className="w-[129px] shrink-0 whitespace-nowrap">Regrouper par :</label>
    <span className="flex items-center h-full w-[207px] bg-white pr-[6px]">
      <select id="regrouper" defaultValue="Zone" className="flex-1 appearance-none bg-transparent outline-none pl-[6px] h-full">
        <option>Zone</option>
        <option>Catégorie</option>
      </select>
      <CaretDown />
    </span>
    <button aria-label="Mode d'affichage" className="ml-[4px] flex items-center gap-[4px]">
      <ViewModeIcon />
      <CaretDown />
    </button>
  </div>
);

const Center = () => (
  <main className="flex-1 min-w-0 mx-[10px] flex flex-col">
    <div className="flex-1 border-2 border-[#a0a0a0] bg-white flex flex-col px-[18px] pb-[18px]">
      <div className="h-[76px] shrink-0 flex items-center">
        <GlobeBigIcon />
        <h2 className="ml-[26px] text-[27px]">Page d'accueil de MonWordPress</h2>
      </div>
      <div className="flex-1 border border-[#e3e3e3]">
        <FilterBar />
        <div className="flex flex-col gap-[22px]">
          <FeatureGroup title="Gestion" items={management} />
          <FeatureGroup title="IIS" items={iis} />
        </div>
      </div>
    </div>
    <div role="tablist" className="h-[40px] shrink-0 flex items-center pl-[9px] text-[17px]">
      <button role="tab" aria-selected="true" className="h-[30px] w-[272px] border-2 border-[#1a86d9] bg-white flex items-center gap-[4px] pl-[2px] whitespace-nowrap">
        <FeaturesViewIcon />
        Affichage des fonctionnalités
      </button>
      <button role="tab" aria-selected="false" className="ml-[3px] flex items-center gap-[4px] whitespace-nowrap">
        <ContentViewIcon />
        Affichage du contenu
      </button>
    </div>
  </main>
);

const ActionRow: React.FC<{ icon?: React.ReactNode; label: string; disabled?: boolean }> = ({ icon, label, disabled }) => (
  <li className="h-[30px] flex items-center">
    <span className="w-[24px] ml-[7px] mr-[12px] flex">{icon}</span>
    {disabled ? (
      <span className="text-[#a5a5a5]">{label}</span>
    ) : (
      <a href="#action" className="text-[#1a6fd4] whitespace-nowrap">{label}</a>
    )}
  </li>
);

const ActionHeading = ({ label }: { label: string }) => (
  <li className="h-[30px] flex items-center pl-[43px] font-bold text-black">{label}</li>
);

const ActionSep = () => (
  <li role="separator" className="h-[7px] flex items-center pl-[4px] pr-[4px]">
    <span className="h-[1px] flex-1 bg-linear-to-r from-transparent via-[#8c8c8c] via-30% to-[#8c8c8c]" />
  </li>
);

const Actions = () => (
  <aside className="w-[300px] shrink-0 border-2 border-[#a0a0a0] bg-linear-to-r from-[#fcfcfc] to-[#e9e9e9] flex flex-col text-[17px]">
    <PanelTitle>Actions</PanelTitle>
    <ul className="pt-[7px]">
      <ActionRow icon={<ExploreIcon />} label="Explorer" />
      <ActionRow label="Modifier les autorisations..." />
      <ActionSep />
      <ActionHeading label="Modifier le site" />
      <ActionRow label="Liaisons..." />
      <ActionRow icon={<BasicSettingsIcon />} label="Paramètres de base..." />
      <ActionSep />
      <ActionRow label="Afficher les applications" />
      <ActionRow label="Afficher les répertoires virtuels" />
      <ActionSep />
    </ul>
    <div className="h-[38px] mr-[4px] mb-[2px] pl-[10px] pr-[14px] bg-linear-to-b from-[#e2e1e2] to-[#f8f8f8] flex items-center justify-between">
      <h3>Gérer le site Web</h3>
      <button aria-label="Réduire la section">
        <svg viewBox="0 0 24 24" className="w-6 h-6">
          <circle cx="12" cy="12" r="11.2" fill="#efefef" stroke="#9b9b9b" strokeWidth="1.2" />
          <path d="M7 14L12 9.5L17 14" fill="none" stroke="#222" strokeWidth="2.6" />
        </svg>
      </button>
    </div>
    <ul>
      <ActionRow icon={<RestartIcon />} label="Redémarrer" disabled />
      <ActionRow icon={<StartIcon />} label="Démarrer" />
      <ActionRow icon={<StopIcon />} label="Arrêter" disabled />
      <ActionSep />
      <ActionHeading label="Parcourir le site Web" />
      <ActionRow icon={<BrowseIcon />} label="Parcourir *:80 (http)" />
      <ActionSep />
      <ActionRow label="Paramètres avancés..." />
      <ActionSep />
      <ActionHeading label="Configurer" />
      <ActionRow label="Limites..." />
      <ActionRow label="HSTS..." />
      <ActionSep />
      <ActionRow icon={<HelpIcon />} label="Aide" />
    </ul>
  </aside>
);

const ContextMenu = () => (
  <div role="menu" className="absolute left-[236px] top-[318px] w-[397px] border-2 border-[#979797] bg-[#fcfcfc] p-px text-[17px]">
    {contextMenu.map((entry, i) =>
      entry === 'sep' ? (
        <div key={i} role="separator" className="h-[9px] flex">
          <span className="w-[35px] bg-[#f0f0f0]" />
          <span className="ml-[11px] mt-[4px] h-[1px] flex-1 bg-[#bfbcb0]" />
        </div>
      ) : (
        <button key={i} role="menuitem" className="relative w-full h-[33px] flex items-center text-left">
          <span className="w-[35px] h-full pl-[4px] bg-[#f0f0f0] flex items-center">{entry.icon}</span>
          <span className="ml-[16px] whitespace-nowrap">{entry.label}</span>
          {entry.submenu && <span className="ml-auto mr-[15px]"><CaretRight /></span>}
          {entry.marked && <span className="absolute -left-[2px] -top-[5px] w-[347px] h-[44px] border-[5px] border-[#ee1c24]" />}
        </button>
      )
    )}
  </div>
);

const StatusBar = () => (
  <footer className="h-[30px] shrink-0 bg-linear-to-r from-[#e4e3e4] to-[#fdfdfd] flex items-center justify-between pl-[6px] pr-[15px] text-[17px]">
    <span>Prêt</span>
    <ServerIcon />
  </footer>
);

export default function App() {
  return (
    <div className="relative min-h-screen flex bg-[#0078d7] pr-[2px] font-['Open_Sans','Noto_Sans',sans-serif] text-[#1b1b1b]">
      <Gradients />
      <div className="flex-1 min-w-0 flex flex-col border-r border-black bg-[#f6f6f6]">
        <TitleBar />
        <AddressBar />
        <MenuBar />
        <div className="flex-1 flex pt-[1px] pb-[3px]">
          <Connections />
          <Center />
          <Actions />
        </div>
        <StatusBar />
      </div>
      <ContextMenu />
    </div>
  );
}
